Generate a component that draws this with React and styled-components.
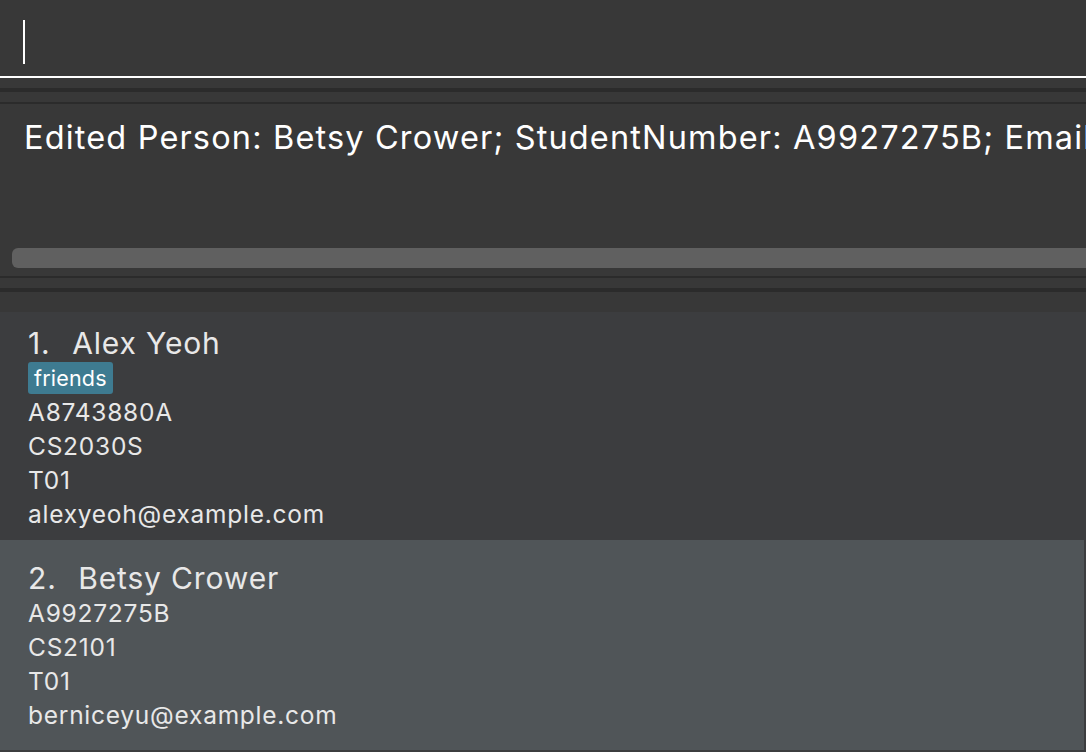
import React from "react";
import styled, { createGlobalStyle } from "styled-components";

const Global = createGlobalStyle`
  html, body { margin: 0; padding: 0; background: #383838; overflow: hidden; }
  body { font-family: Inter, "Open Sans", sans-serif; }
`;

const Page = styled.div`
  width: 1086px;
  height: 752px;
  background: #383838;
  display: flex;
  flex-direction: column;
  overflow: hidden;
`;

const CommandBox = styled.div`
  border-bottom: 2px solid #ffffff;
  display: flex;
  align-items: flex-start;
  padding: 20px 0 0 23px;
  box-sizing: content-box;
  height: 56px;
`;

const Caret = styled.div`
  width: 2px;
  height: 44px;
  background: #ffffff;
`;

const Divider = styled.div`
  height: ${(p) => p.$h}px;
  margin-top: ${(p) => p.$mt}px;
  background: #2b2b2b;
`;

const ResultPane = styled.div`
  height: 172px;
  display: flex;
  flex-direction: column;
  padding-left: 12px;
  box-sizing: border-box;
`;

const ResultText = styled.div`
  color: #ffffff;
  font-size: 32.5px;
  white-space: nowrap;
  overflow: hidden;
  padding: 16px 0 0 12px;
  line-height: 36px;
  height: 128px;
  box-sizing: border-box;
  letter-spacing: 1.15px;
`;

const ScrollBar = styled.div`
  height: 20px;
  margin-top: 16px;
  background: #606060;
  border-radius: 6px 0 0 6px;
`;

const List = styled.div`
  margin-top: 20px;
  background: #3c3d3f;
  flex: 1;
  display: flex;
  flex-direction: column;
`;

const Card = styled.div`
  background: ${(p) => (p.$selected ? "#505558" : "#3c3d3f")};
  margin-right: ${(p) => (p.$selected ? 2 : 0)}px;
  height: ${(p) => p.$h}px;
  padding: ${(p) => (p.$selected ? 20 : 13)}px 0 0 28px;
  box-sizing: border-box;
  color: #e8e8e8;
`;

const Name = styled.div`
  font-size: 30px;
  line-height: 36px;
  white-space: pre;
  letter-spacing: 0.85px;
`;

const Index = styled.span`
  margin-right: 3px;
`;

const Tags = styled.div`
  display: flex;
  gap: 6px;
  margin: 1px 0 1px 0;
`;

const Tag = styled.span`
  background: #3e7b91;
  color: #ffffff;
  font-size: 21.5px;
  line-height: 32px;
  padding: 0 6px;
  border-radius: 3px;
  letter-spacing: 0.2px;
`;

const Field = styled.div`
  font-size: 24.5px;
  line-height: 34px;
  letter-spacing: 0.75px;
`;

const people = [
  {
    name: "Alex Yeoh",
    tags: ["friends"],
    fields: ["A8743880A", "CS2030S", "T01", "alexyeoh@example.com"],
    h: 228,
  },
  {
    name: "Betsy Crower",
    tags: [],
    fields: ["A9927275B", "CS2101", "T01", "berniceyu@example.com"],
    h: 210,
    selected: true,
  },
];

export default function App() {
  return (
    <Page>
      <Global />
      <CommandBox>
        <Caret />
      </CommandBox>
      <Divider $h={4} $mt={10} />
      <Divider $h={2} $mt={10} />
      <ResultPane>
        <ResultText>
          Edited Person: Betsy Crower; StudentNumber: A9927275B; Email: berniceyu@example.com
        </ResultText>
        <ScrollBar />
      </ResultPane>
      <Divider $h={2} $mt={0} />
      <Divider $h={4} $mt={10} />
      <List>
        {people.map((p, i) => (
          <Card key={i} $selected={p.selected} $h={p.h}>
            <Name>
              <Index>{`${i + 1}. `}</Index>
              {` ${p.name}`}
            </Name>
            {p.tags.length > 0 && (
              <Tags>
                {p.tags.map((t) => (
                  <Tag key={t}>{t}</Tag>
                ))}
              </Tags>
            )}
            {p.fields.map((f) => (
              <Field key={f}>{f}</Field>
            ))}
          </Card>
        ))}
      </List>
    </Page>
  );
}
